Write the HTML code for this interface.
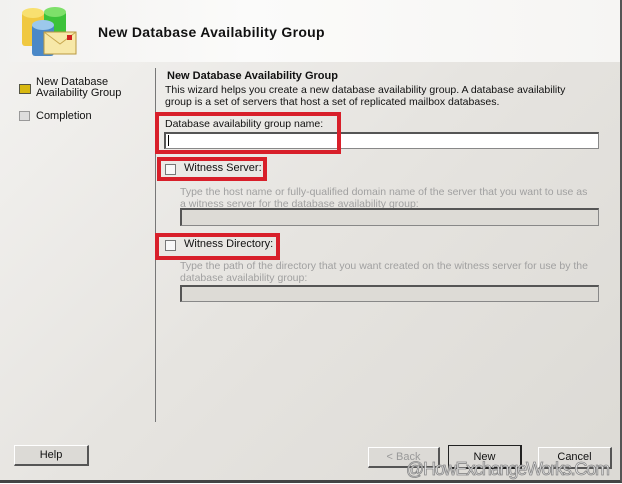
<!DOCTYPE html>
<html><head><style>
body{margin:0;width:622px;height:484px;overflow:hidden;background:#fff;font-family:"Liberation Sans",sans-serif;}
#w{position:absolute;left:0;top:0;width:620px;height:480px;border-right:2px solid #555;border-bottom:3px solid #444;background:linear-gradient(135deg,#f4f3f1 0%,#e6e4e0 50%,#dcdad5 100%);overflow:hidden}
#hd{position:absolute;left:0;top:0;width:620px;height:62px;background:linear-gradient(90deg,#f2f1ef,#fbfbfa 40%,#f6f5f3)}
.a{position:absolute;font-size:11px;color:#111;white-space:nowrap}
.g{color:#a0a0a0}
.red{position:absolute;border:4px solid #d81f2a;box-sizing:border-box}
.in{position:absolute;box-sizing:border-box;border:1px solid #888;border-top:2px solid #555;border-left:2px solid #555}
.cb{position:absolute;width:11px;height:11px;box-sizing:border-box;border:1px solid #777;background:#f8f8f8}
.bt{position:absolute;box-sizing:border-box;border:1px solid #fff;border-right:2px solid #555;border-bottom:2px solid #555;background:#dcdad6;font-size:11px;text-align:center;line-height:18px;color:#111}
</style></head><body><div id="w">
<div id="hd"></div>
<svg style="position:absolute;left:18px;top:6px" width="62" height="52" viewBox="0 0 62 52">
<rect x="4" y="6" width="22" height="34" rx="3" fill="#f0c840"/><ellipse cx="15" cy="7" rx="11" ry="5" fill="#f8e070"/>
<rect x="26" y="5" width="22" height="28" rx="3" fill="#3cc23a"/><ellipse cx="37" cy="6" rx="11" ry="5" fill="#7ee06a"/>
<rect x="14" y="18" width="22" height="32" rx="3" fill="#4a88c8"/><ellipse cx="25" cy="19" rx="11" ry="5" fill="#9cc8ec"/>
<rect x="26" y="26" width="32" height="22" fill="#f7e8a8" stroke="#b89840"/><path d="M26 26 L42 38 L58 26" fill="none" stroke="#c8a850"/><rect x="49" y="29" width="5" height="5" fill="#d02020"/>
</svg>
<div class="a" style="left:98px;top:24px;font-size:14px;font-weight:bold;letter-spacing:0.3px">New Database Availability Group</div>
<div style="position:absolute;left:19px;top:84px;width:10px;height:8px;background:#d8b810;border:1px solid #554"></div>
<div class="a" style="left:36px;top:77px;line-height:11px">New Database<br>Availability Group</div>
<div style="position:absolute;left:19px;top:111px;width:9px;height:8px;background:#ddd;border:1px solid #999"></div>
<div class="a" style="left:36px;top:110px">Completion</div>
<div style="position:absolute;left:155px;top:68px;width:1px;height:354px;background:#777"></div>
<div class="a" style="left:167px;top:70px;font-weight:bold">New Database Availability Group</div>
<div class="a" style="left:165px;top:84px;font-size:10.5px;line-height:12px">This wizard helps you create a new database availability group. A database availability<br>group is a set of servers that host a set of replicated mailbox databases.</div>
<div class="in" style="left:164px;top:132px;width:435px;height:17px;background:#fff"></div>
<div style="position:absolute;left:168px;top:135px;width:1px;height:11px;background:#000"></div>
<div class="red" style="left:155px;top:112px;width:186px;height:42px"></div>
<div class="a" style="left:165px;top:118px;font-size:10.5px">Database availability group name:</div>
<div class="red" style="left:157px;top:157px;width:110px;height:24px"></div>
<div class="cb" style="left:165px;top:164px"></div>
<div class="a" style="left:184px;top:162px">Witness Server:</div>
<div class="a g" style="left:180px;top:186px;font-size:10.5px;line-height:12px">Type the host name or fully-qualified domain name of the server that you want to use as<br>a witness server for the database availability group:</div>
<div class="in" style="left:180px;top:208px;width:419px;height:18px;background:#dddbd6"></div>
<div class="red" style="left:155px;top:233px;width:125px;height:27px"></div>
<div class="cb" style="left:165px;top:240px"></div>
<div class="a" style="left:184px;top:238px">Witness Directory:</div>
<div class="a g" style="left:180px;top:260px;font-size:10.5px;line-height:12px">Type the path of the directory that you want created on the witness server for use by the<br>database availability group:</div>
<div class="in" style="left:180px;top:285px;width:419px;height:17px;background:#dddbd6"></div>
<div class="bt" style="left:14px;top:445px;width:75px;height:21px">Help</div>
<div class="bt" style="left:368px;top:447px;width:72px;height:21px;color:#999">&lt; Back</div>
<div class="bt" style="left:448px;top:445px;width:74px;height:24px;border:1px solid #222;border-right:2px solid #222;border-bottom:2px solid #222;line-height:22px">New</div>
<div class="bt" style="left:538px;top:447px;width:74px;height:22px">Cancel</div>
<div class="a" style="left:406px;top:459px;font-size:18px;color:#e8e8e8;-webkit-text-stroke:0.8px #888;letter-spacing:-1.2px">@HowExchangeWorks.Com</div>
</div></body></html>
